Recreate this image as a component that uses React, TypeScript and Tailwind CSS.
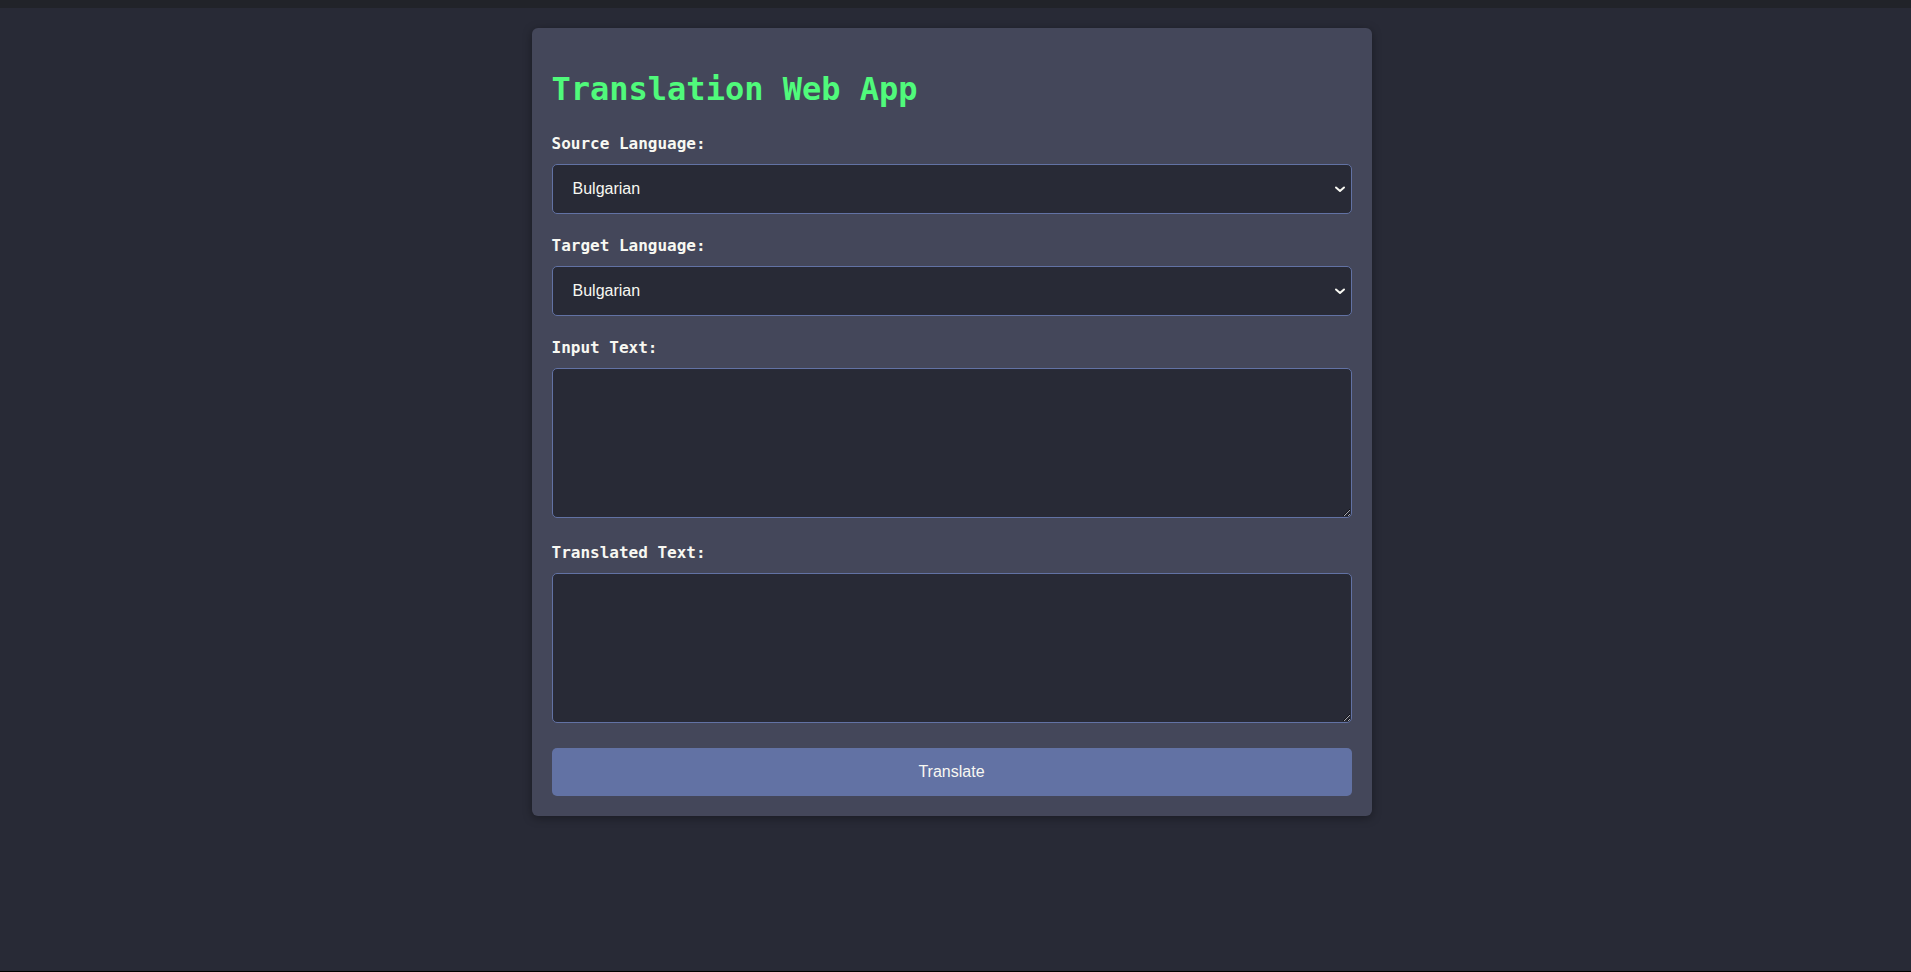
import { useState } from 'react'

const languages = ['Bulgarian', 'English', 'French', 'German', 'Spanish', 'Italian', 'Russian']

const labelCls =
  "block h-6 leading-6 mb-2 text-base font-bold text-[#f8f8f2] font-['DejaVu_Sans_Mono',monospace]"

function LangSelect({ value, onChange }: { value: string; onChange: (v: string) => void }) {
  return (
    <div className="relative">
      <select
        value={value}
        onChange={(e) => onChange(e.target.value)}
        className="block w-full h-[50px] appearance-none rounded-[5px] border border-[#6272a4] bg-[#282a36] pl-5 pr-10 text-base text-[#f8f8f2] font-['Liberation_Sans',Arial,sans-serif] outline-none"
      >
        {languages.map((l) => (
          <option key={l}>{l}</option>
        ))}
      </select>
      <svg
        className="pointer-events-none absolute right-[6px] top-1/2 -translate-y-1/2"
        width="12"
        height="12"
        viewBox="0 0 12 12"
        fill="none"
      >
        <path d="M2 4.5l4 3.5 4-3.5" stroke="#f8f8f2" strokeWidth="2" strokeLinecap="round" strokeLinejoin="round" />
      </svg>
    </div>
  )
}

export default function App() {
  const [source, setSource] = useState('Bulgarian')
  const [target, setTarget] = useState('Bulgarian')
  const [input, setInput] = useState('')
  const [output, setOutput] = useState('')

  return (
    <div className="min-h-screen flex flex-col bg-[#282a36]">
      <div className="h-2 bg-[#212329]" />
      <main className="flex-1 flex justify-center pt-5 pr-2">
        <div className="w-[840px] self-start rounded-[6px] bg-[#44475a] px-5 pt-5 pb-5 shadow-[0_2px_10px_rgba(0,0,0,0.35)]">
          <h1 className="mt-[21px] mb-[23px] h-10 leading-10 text-[32px] font-bold text-[#50fa7b] font-['DejaVu_Sans_Mono',monospace]">
            Translation Web App
          </h1>

          <label className={labelCls}>Source Language:</label>
          <LangSelect value={source} onChange={setSource} />

          <label className={`${labelCls} mt-5`}>Target Language:</label>
          <LangSelect value={target} onChange={setTarget} />

          <label className={`${labelCls} mt-5`}>Input Text:</label>
          <textarea
            value={input}
            onChange={(e) => setInput(e.target.value)}
            className="block w-full h-[150px] rounded-[5px] border border-[#6272a4] bg-[#282a36] p-3 text-base text-[#f8f8f2] font-['Liberation_Sans',Arial,sans-serif] outline-none"
          />

          <label className={`${labelCls} mt-[23px]`}>Translated Text:</label>
          <textarea
            value={output}
            onChange={(e) => setOutput(e.target.value)}
            className="block w-full h-[150px] rounded-[5px] border border-[#6272a4] bg-[#282a36] p-3 text-base text-[#f8f8f2] font-['Liberation_Sans',Arial,sans-serif] outline-none"
          />

          <button
            onClick={() => setOutput(input)}
            className="mt-[25px] block w-full h-12 rounded-[5px] bg-[#6272a4] text-base text-[#f8f8f2] font-['Liberation_Sans',Arial,sans-serif]"
          >
            Translate
          </button>
        </div>
      </main>
      <div className="h-px bg-black" />
    </div>
  )
}
